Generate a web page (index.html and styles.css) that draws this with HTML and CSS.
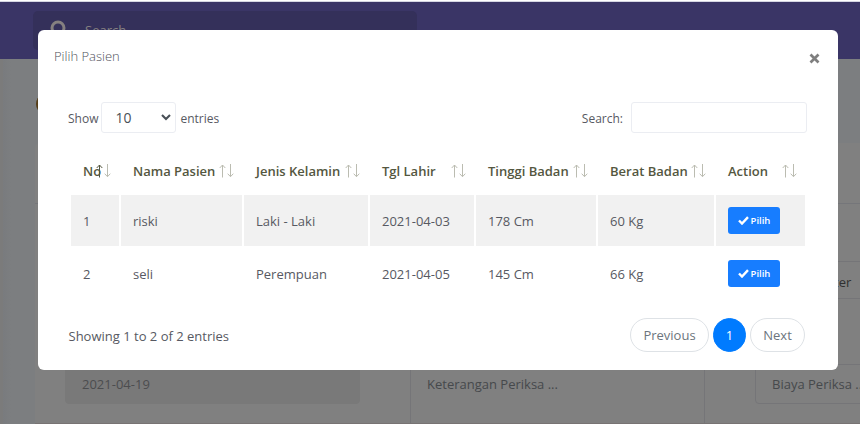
FILE: index.html
```html
<!DOCTYPE html>
<html lang="id">
<head>
<meta charset="utf-8">
<title>Pilih Pasien</title>
<link rel="stylesheet" href="styles.css">
</head>
<body>
<div class="page">
  <header class="topbar">
    <div class="topsearch">
      <svg width="18" height="20" viewBox="0 0 18 20" fill="none" stroke="#858080" stroke-width="3"><circle cx="8" cy="8" r="6"/><path d="M12 12l5 6"/></svg>
      <span>Search</span>
    </div>
  </header>
  <div class="content">
    <div class="sidebar"></div>
    <main class="main">
      <div class="title"><i class="dot"></i></div>
      <section class="card">
        <div class="card-head"></div>
        <div class="form">
          <div class="column"><div class="field disabled">2021-04-19</div></div>
          <div class="field area">Keterangan Periksa ...</div>
          <div class="column">
            <div class="field doctor">Pilih Dokter</div>
            <div class="field">Biaya Periksa ...</div>
          </div>
        </div>
      </section>
    </main>
  </div>
</div>
<div class="modal">
  <div class="modal-head"><span class="modal-title">Pilih Pasien</span>
    <svg class="close" width="11" height="11" viewBox="0 0 11 11"><path d="M1.5 1.5l8 8M9.5 1.5l-8 8" stroke="#7f7f7f" stroke-width="2.7"/></svg>
  </div>
  <div class="tools">
    <div class="length"><span>Show</span><div class="select"><span>10</span><svg width="10" height="7" viewBox="0 0 10 7" fill="none"><path d="M1 1l4 4 4-4" stroke="#495057" stroke-width="2.1"/></svg></div><span>entries</span></div>
    <div class="filter"><span>Search:</span><div class="input"></div></div>
  </div>
  <table class="table">
    <colgroup><col class="c1"><col class="c2"><col class="c3"><col class="c4"><col class="c5"><col class="c6"><col class="c7"></colgroup>
    <thead><tr>
      <th class="sorted">No<svg class="sort" viewBox="0 0 15 14"><path class="up" d="M3.5 13.5V1M.7 4l2.8-3 2.8 3"/><path d="M11.5 0v12.5M8.7 9.7l2.8 3 2.8-3"/></svg></th>
      <th>Nama Pasien<svg class="sort" viewBox="0 0 15 14"><path d="M3.5 13.5V1M.7 4l2.8-3 2.8 3M11.5 0v12.5M8.7 9.7l2.8 3 2.8-3"/></svg></th>
      <th>Jenis Kelamin<svg class="sort" viewBox="0 0 15 14"><path d="M3.5 13.5V1M.7 4l2.8-3 2.8 3M11.5 0v12.5M8.7 9.7l2.8 3 2.8-3"/></svg></th>
      <th>Tgl Lahir<svg class="sort" viewBox="0 0 15 14"><path d="M3.5 13.5V1M.7 4l2.8-3 2.8 3M11.5 0v12.5M8.7 9.7l2.8 3 2.8-3"/></svg></th>
      <th>Tinggi Badan<svg class="sort" viewBox="0 0 15 14"><path d="M3.5 13.5V1M.7 4l2.8-3 2.8 3M11.5 0v12.5M8.7 9.7l2.8 3 2.8-3"/></svg></th>
      <th>Berat Badan<svg class="sort" viewBox="0 0 15 14"><path d="M3.5 13.5V1M.7 4l2.8-3 2.8 3M11.5 0v12.5M8.7 9.7l2.8 3 2.8-3"/></svg></th>
      <th>Action<svg class="sort" viewBox="0 0 15 14"><path d="M3.5 13.5V1M.7 4l2.8-3 2.8 3M11.5 0v12.5M8.7 9.7l2.8 3 2.8-3"/></svg></th>
    </tr></thead>
    <tbody>
      <tr class="odd"><td>1</td><td>riski</td><td>Laki - Laki</td><td>2021-04-03</td><td>178 Cm</td><td>60 Kg</td><td><div class="pick"><svg width="11" height="9" viewBox="0 0 11 9"><path d="M1 4.5l3 3L10 1.2" fill="none" stroke="#fff" stroke-width="2.4"/></svg>Pilih</div></td></tr>
      <tr><td>2</td><td>seli</td><td>Perempuan</td><td>2021-04-05</td><td>145 Cm</td><td>66 Kg</td><td><div class="pick"><svg width="11" height="9" viewBox="0 0 11 9"><path d="M1 4.5l3 3L10 1.2" fill="none" stroke="#fff" stroke-width="2.4"/></svg>Pilih</div></td></tr>
    </tbody>
  </table>
  <div class="foot">
    <span>Showing 1 to 2 of 2 entries</span>
    <div class="pager"><span class="page-link prev">Previous</span><span class="page-link active">1</span><span class="page-link next">Next</span></div>
  </div>
</div>
</body>
</html>
```
FILE: styles.css
```css
* { box-sizing: border-box; }
body { margin: 0; width: 860px; height: 424px; overflow: hidden; position: relative; font: 13px/20px "Open Sans", sans-serif; color: #575962; }
.page { height: 424px; display: flex; flex-direction: column; border-top: 1px solid #fff; background: #7c7e80; }
.topbar { height: 58px; flex: none; background: #3a3566; border-top: 1px solid #d5d6e2; padding: 9px 0 0 33px; }
.topsearch { width: 384px; height: 39px; border-radius: 5px; background: #34305a; display: flex; padding: 9px 17px; gap: 17px; color: #858080; }
.content { display: flex; height: 365px; }
.sidebar { width: 3px; background: #7b7b7b; }
.main { flex: 1; padding-left: 32px; min-width: 0; background: linear-gradient(90deg, #797b7e, #7c7e80 8px); }
.title { height: 84px; padding: 37px 0 0 1px; }
.dot { display: block; width: 12px; height: 16px; border-radius: 50%; background: #563e17; }
.card { background: #808080; height: 281px; border-radius: 5px 0 0; border-bottom: 1px solid #777373; }
.card-head { height: 61px; border-bottom: 1px solid #75767a; }
.form { display: grid; grid-template-columns: 295px 295px 120px; column-gap: 50px; padding-left: 30px; height: 219px; overflow: hidden; }
.form { column-gap: 0; grid-template-columns: 345px 295px 50px 120px; }
.form > :last-child { grid-column: 4; }
.column { display: flex; flex-direction: column; justify-content: flex-end; padding-bottom: 19px; gap: 65px; }
.field { height: 40px; border: 1px solid #757578; border-radius: 4px; padding: 9px 16px; color: #46494c; white-space: nowrap; }
.doctor { height: 38px; padding: 10px 25px; color: #303030; }
.disabled { width: 295px; background: #797979; border-color: #797979; color: #4c4d4f; }
.area { height: 219px; border-width: 0 1px; border-radius: 0; padding-top: 170px; }
.modal { position: absolute; left: 38px; top: 30px; width: 800px; height: 340px; background: #fff; border-radius: 6px; padding: 16px 16px 0; }
.modal-head { height: 56px; display: flex; justify-content: space-between; }
.modal-title { font-weight: 300; color: #50525a; }
.close { margin: 7px 2px 0 0; }
.tools { display: flex; justify-content: space-between; height: 31px; padding: 0 15px 0 14px; font-size: 12px; }
.length, .filter { display: flex; }
.length > span, .filter > span { padding-top: 7px; }
.select { width: 75px; height: 31px; margin: 0 4px 0 3px; border: 1px solid #ebedf2; border-radius: 3px; display: flex; align-items: center; justify-content: space-between; padding: 0 4px 0 13px; font-size: 14px; color: #495057; }
.input { width: 176px; height: 31px; margin-left: 8px; border: 1px solid #ebedf2; border-radius: 3px; }
.table { table-layout: fixed; width: 738px; margin: 13px 0 0 15px; border-spacing: 2px; }
.c1 { width: 48px; } .c2 { width: 121px; } .c3 { width: 124px; } .c4 { width: 104px; } .c5 { width: 120px; } .c6 { width: 116px; } .c7 { width: 89px; }
.table th, .table td { padding: 0 12px; text-align: left; white-space: nowrap; }
.table th { height: 45px; font-weight: 600; color: #54573f; position: relative; }
.table td { height: 51px; }
.odd td { background: #f1f1f1; }
.sort { position: absolute; right: 8px; top: 16px; width: 15px; height: 14px; fill: none; stroke: #bbbcb1; stroke-width: 1; }
.up { stroke: #54573f; }
.pick { width: 52px; height: 27px; border-radius: 3px; background: #177dff; color: #fff; font-size: 9.5px; font-weight: 600; display: flex; align-items: center; justify-content: center; gap: 2px; }
.foot { display: flex; justify-content: space-between; margin-top: 17px; padding: 0 17px 0 14.5px; }
.foot > span { padding-top: 8px; }
.pager { display: flex; gap: 4px; }
.page-link { height: 34px; border: 1px solid #dee2e6; border-radius: 17px; color: #6c757d; display: flex; align-items: center; justify-content: center; }
.prev { width: 79px; } .next { width: 55px; }
.active { width: 33px; background: #007bff; border-color: #007bff; color: #fff; }
```
